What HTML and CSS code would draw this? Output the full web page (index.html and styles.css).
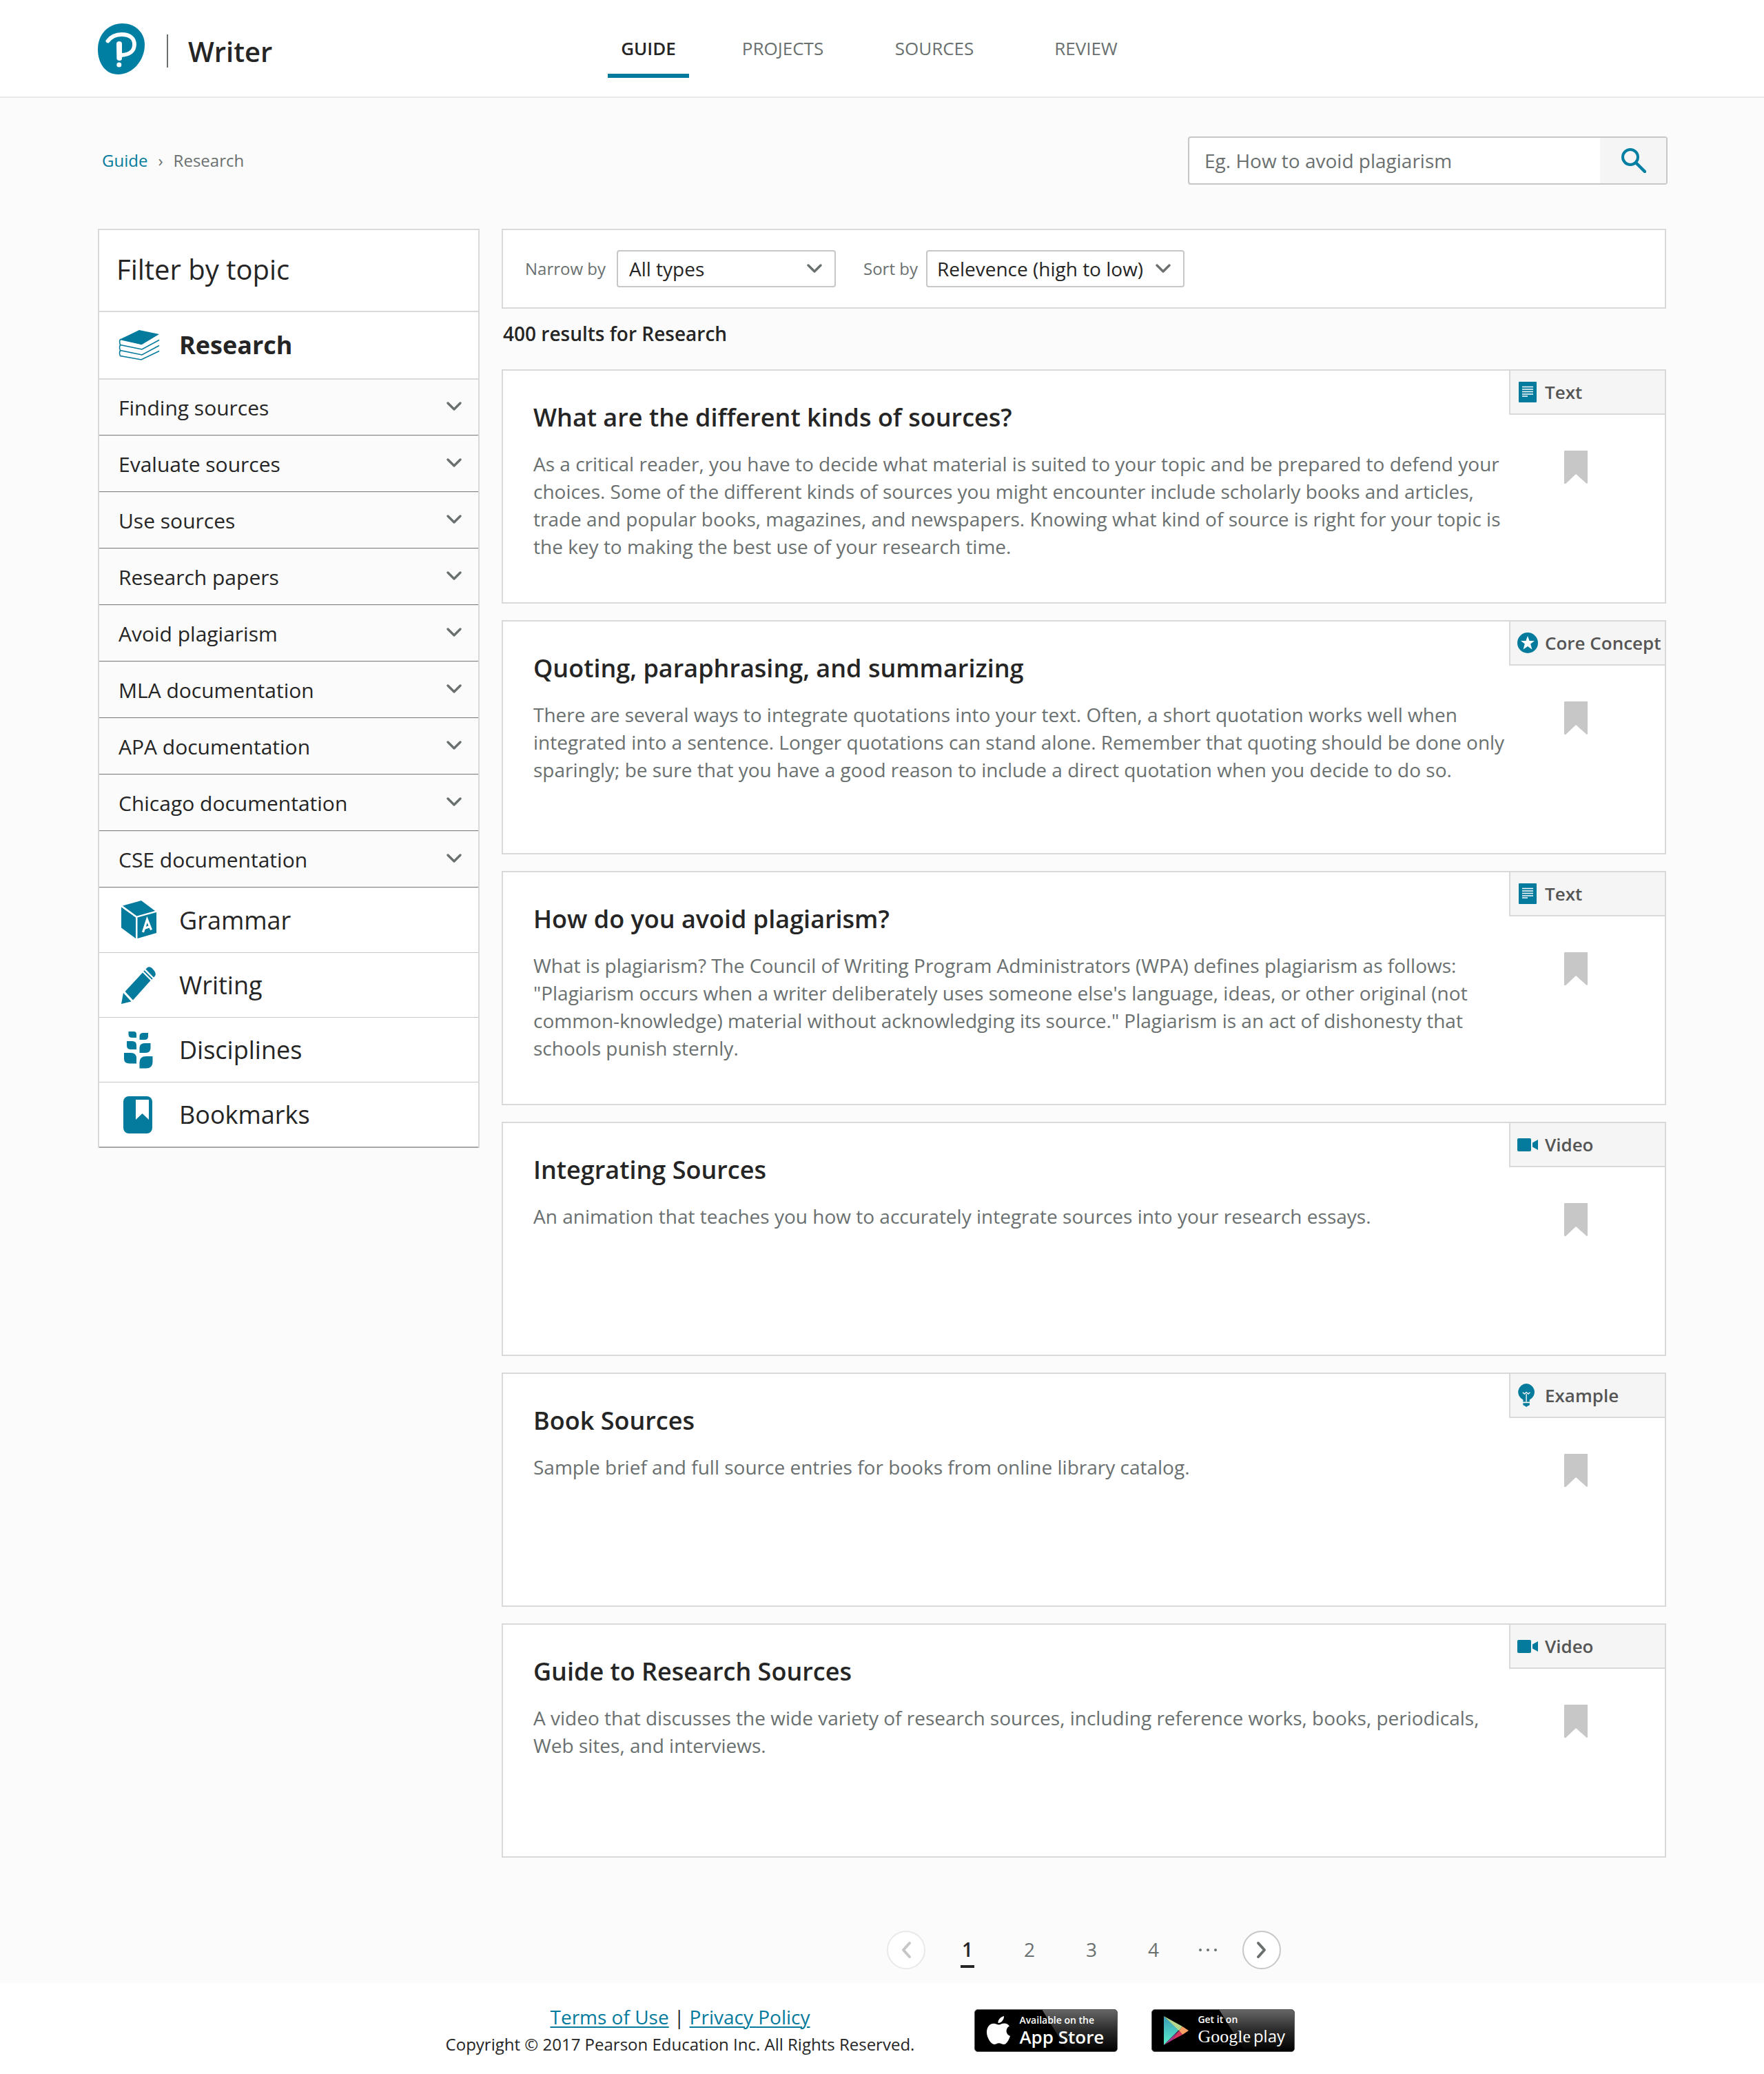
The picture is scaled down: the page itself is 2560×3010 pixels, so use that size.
FILE: index.html
```html
<!DOCTYPE html>
<html lang="en">
<head>
<meta charset="utf-8">
<title>Writer – Research</title>
<link rel="stylesheet" href="styles.css">
</head>
<body>
<svg class="sprite" aria-hidden="true">
  <symbol id="chevron" viewBox="0 0 22 14"><path d="M2 2l9 9 9-9" fill="none" stroke="currentColor" stroke-width="3.400" stroke-linecap="round" stroke-linejoin="round"/></symbol>
  <symbol id="bookmark" viewBox="0 0 34 48"><path d="M1 0h32q1 0 1 1v46q0 1-1.600.8L17 34 2.600 47.800Q0 48.500 0 47V1q0-1 1-1z" fill="currentColor"/></symbol>
  <symbol id="tag-text" viewBox="0 0 30 34"><rect x="2" y="2" width="26" height="30" rx="1" fill="currentColor"/><path d="M7 9.500h16M7 13h16M7 16.500h16M7 20h16M7 23h8" stroke="#fff" stroke-width="1.600"/></symbol>
  <symbol id="tag-core" viewBox="0 0 30 34"><circle cx="15" cy="17" r="15" fill="currentColor"/><path d="M15 7l2.600 7h7.400l-5.800 4.500 2.200 8-6.400-4.500-6.400 4.500 2.200-8L5 14h7.400z" fill="#fff"/></symbol>
  <symbol id="tag-video" viewBox="0 0 30 34"><rect y="8" width="20" height="19" rx="2" fill="currentColor"/><path d="M22 14.500L30 10v15l-8-4.500z" fill="currentColor"/></symbol>
  <symbol id="tag-example" viewBox="0 0 30 36"><path d="M13 0a13 13 0 0 1 5 24.800V28H8v-3.200A13 13 0 0 1 13 0z" fill="currentColor"/><path d="M8 30h10v3l-3 1.500-2 1.500-2-1.500L8 33z" fill="currentColor"/><path d="M13 28V16m-5.500-2.500L10 16l3-2.500 3 2.500 2.500-2.500" fill="none" stroke="#f5f5f5" stroke-width="1.500"/></symbol>
</svg>

<header class="topbar">
  <a class="brand" href="#">
    <svg width="68" height="74" viewBox="0 0 68 74" role="img" aria-label="Pearson"><path d="M35.500 0C54 0 68 13 68 31c0 23-18 43-38.500 43C11 74 0 58 0 37.500 0 15 16 0 35.500 0z" fill="#007fa3"/><path d="M14.500 25.500C19 19.500 26 16 34.500 16 46 16 53 21.500 53 30.500c0 9.500-7 15-18.500 15.500" fill="none" stroke="#fff" stroke-width="5.800" stroke-linecap="round"/><path d="M27 29.500q0-3.500 4-3.500t4 3.500V51q0 3-3.600 3T27.400 51z" fill="#fff"/><circle cx="30.800" cy="60" r="3.500" fill="#fff"/></svg>
    <span class="brand-name">Writer</span>
  </a>
  <nav class="tabs" aria-label="Main">
    <a class="tab tab-active" href="#" aria-current="page">GUIDE</a>
    <a class="tab" href="#">PROJECTS</a>
    <a class="tab" href="#">SOURCES</a>
    <a class="tab" href="#">REVIEW</a>
  </nav>
</header>

<div class="page">
  <div class="subbar">
    <nav class="crumbs" aria-label="Breadcrumb"><a href="#">Guide</a><span class="crumb-sep">›</span><span>Research</span></nav>
    <form class="search">
      <input type="search" aria-label="Search" placeholder="Eg. How to avoid plagiarism">
      <button type="button" aria-label="Search"><svg width="36" height="36" viewBox="0 0 36 36"><circle cx="13" cy="13" r="11" fill="none" stroke="#007fa3" stroke-width="4"/><path d="M21 21l13 13" stroke="#007fa3" stroke-width="4.500" stroke-linecap="round"/></svg></button>
    </form>
  </div>

  <div class="columns">
    <aside class="sidebar">
      <h2 class="side-title">Filter by topic</h2>
      <a class="topic topic-open" href="#"><svg width="60" height="60" viewBox="0 0 60 60"><path d="M30 8L59 14 34 29 2 21.500z" fill="#047a9c"/><g fill="none" stroke="#047a9c" stroke-width="1.600"><path d="M3 21Q.5 24 2.500 29.500L34 36 59 22.500M2.500 21.500L34 28.500"/><path d="M2.500 30Q.5 33 2.500 37.500L34 44 59 30.500"/><path d="M2.500 38Q.5 41 2.500 45.500L33 51 59 38.500"/></g></svg>Research</a>
      <button class="subtopic" type="button">Finding sources<svg class="chev"><use href="#chevron"/></svg></button>
      <button class="subtopic" type="button">Evaluate sources<svg class="chev"><use href="#chevron"/></svg></button>
      <button class="subtopic" type="button">Use sources<svg class="chev"><use href="#chevron"/></svg></button>
      <button class="subtopic" type="button">Research papers<svg class="chev"><use href="#chevron"/></svg></button>
      <button class="subtopic" type="button">Avoid plagiarism<svg class="chev"><use href="#chevron"/></svg></button>
      <button class="subtopic" type="button">MLA documentation<svg class="chev"><use href="#chevron"/></svg></button>
      <button class="subtopic" type="button">APA documentation<svg class="chev"><use href="#chevron"/></svg></button>
      <button class="subtopic" type="button">Chicago documentation<svg class="chev"><use href="#chevron"/></svg></button>
      <button class="subtopic" type="button">CSE documentation<svg class="chev"><use href="#chevron"/></svg></button>
      <a class="topic" href="#"><svg width="60" height="60" viewBox="0 0 60 60"><g fill="#047a9c"><path d="M6 8.500L33 1 53 16 26.500 23.500z"/><path d="M4 10.500L25 25.500V56L4 40.500z"/><path d="M27.500 25.500L55 18v30L27.500 56z"/></g><path d="M35.500 47L41.500 28.500 47.500 43.500M37.500 41.500L45.500 38.500" fill="none" stroke="#fff" stroke-width="3.200"/></svg>Grammar</a>
      <a class="topic" href="#"><svg width="60" height="60" viewBox="0 0 60 60"><g fill="#047a9c"><path d="M4 57L7 41 18.500 53.500z"/><path d="M9.500 39L35 11.500 46.500 23 21 51.500z"/><path d="M40.500 5.500Q44 1.500 48.500 5L52 9Q55.500 14 52 17.500L51 18.500 39.500 6.500z"/><path d="M37 9l12 12" stroke="#047a9c" stroke-width="1.800"/></g></svg>Writing</a>
      <a class="topic" href="#"><svg width="60" height="60" viewBox="0 0 60 60"><g fill="#047a9c"><path d="M14.500 3H22q4 0 4 4v5h-6q-5.500 0-5.500-4.500z"/><path d="M43 5h-7q-5.500 0-5.500 5v5H38q5 0 5-5z"/><path d="M12 17h8q6 0 6 6v6h-8q-6 0-6-5z"/><path d="M46.500 20H38q-7.500 0-7.500 7v7H39q7.500 0 7.500-7z"/><path d="M8 34h10q8 0 8 8v7.500H16q-8 0-8-7z"/><path d="M49.500 39H40q-9.500 0-9.500 9v8.500H40q9.500 0 9.500-9z"/></g></svg>Disciplines</a>
      <a class="topic" href="#"><svg width="60" height="60" viewBox="0 0 60 60"><rect x="7" y="3" width="42" height="54" rx="8" fill="#047a9c"/><path d="M25 8h19v29l-9.500-9L25 37z" fill="#fff"/></svg>Bookmarks</a>
    </aside>

    <main class="results">
      <form class="filters">
        <label for="types">Narrow by</label>
        <span class="pick pick-types"><select id="types"><option>All types</option></select><svg class="chev"><use href="#chevron"/></svg></span>
        <label class="label-sort" for="sort">Sort by</label>
        <span class="pick pick-sort"><select id="sort"><option>Relevence (high to low)</option></select><svg class="chev"><use href="#chevron"/></svg></span>
      </form>
      <p class="count">400 results for Research</p>

      <div class="cards">
        <article class="card">
          <div class="card-text"><h3>What are the different kinds of sources?</h3>
          <p>As a critical reader, you have to decide what material is suited to your topic and be prepared to defend your choices. Some of the different kinds of sources you might encounter include scholarly books and articles, trade and popular books, magazines, and newspapers. Knowing what kind of source is right for your topic is the key to making the best use of your research time.</p></div>
          <div class="card-side"><div class="tag"><svg><use href="#tag-text"/></svg>Text</div><button class="save" type="button" aria-label="Bookmark"><svg><use href="#bookmark"/></svg></button></div>
        </article>
        <article class="card">
          <div class="card-text"><h3>Quoting, paraphrasing, and summarizing</h3>
          <p>There are several ways to integrate quotations into your text. Often, a short quotation works well when integrated into a sentence. Longer quotations can stand alone. Remember that quoting should be done only sparingly; be sure that you have a good reason to include a direct quotation when you decide to do so.</p></div>
          <div class="card-side"><div class="tag"><svg><use href="#tag-core"/></svg>Core Concept</div><button class="save" type="button" aria-label="Bookmark"><svg><use href="#bookmark"/></svg></button></div>
        </article>
        <article class="card">
          <div class="card-text"><h3>How do you avoid plagiarism?</h3>
          <p>What is plagiarism? The Council of Writing Program Administrators (WPA) defines plagiarism as follows: "Plagiarism occurs when a writer deliberately uses someone else's language, ideas, or other original (not common-knowledge) material without acknowledging its source." Plagiarism is an act of dishonesty that schools punish sternly.</p></div>
          <div class="card-side"><div class="tag"><svg><use href="#tag-text"/></svg>Text</div><button class="save" type="button" aria-label="Bookmark"><svg><use href="#bookmark"/></svg></button></div>
        </article>
        <article class="card">
          <div class="card-text"><h3>Integrating Sources</h3>
          <p>An animation that teaches you how to accurately integrate sources into your research essays.</p></div>
          <div class="card-side"><div class="tag"><svg><use href="#tag-video"/></svg>Video</div><button class="save" type="button" aria-label="Bookmark"><svg><use href="#bookmark"/></svg></button></div>
        </article>
        <article class="card">
          <div class="card-text"><h3>Book Sources</h3>
          <p>Sample brief and full source entries for books from online library catalog.</p></div>
          <div class="card-side"><div class="tag"><svg><use href="#tag-example"/></svg>Example</div><button class="save" type="button" aria-label="Bookmark"><svg><use href="#bookmark"/></svg></button></div>
        </article>
        <article class="card">
          <div class="card-text"><h3>Guide to Research Sources</h3>
          <p>A video that discusses the wide variety of research sources, including reference works, books, periodicals, Web sites, and interviews.</p></div>
          <div class="card-side"><div class="tag"><svg><use href="#tag-video"/></svg>Video</div><button class="save" type="button" aria-label="Bookmark"><svg><use href="#bookmark"/></svg></button></div>
        </article>
      </div>

      <nav class="pager" aria-label="Pages">
        <button class="arrow" type="button" aria-label="Previous page" disabled><svg width="16" height="26" viewBox="0 0 16 26"><path d="M13 3L4 13l9 10" fill="none" stroke="currentColor" stroke-width="4" stroke-linecap="round" stroke-linejoin="round"/></svg></button>
        <div class="pages">
          <a class="num num-active" href="#" aria-current="page"><span>1</span></a>
          <a class="num" href="#"><span>2</span></a>
          <a class="num" href="#"><span>3</span></a>
          <a class="num" href="#"><span>4</span></a>
          <svg class="dots" width="68" height="6" viewBox="0 0 68 6"><g fill="#6a7070"><circle cx="23" cy="3" r="2"/><circle cx="34" cy="3" r="2"/><circle cx="45" cy="3" r="2"/></g></svg>
        </div>
        <button class="arrow" type="button" aria-label="Next page"><svg width="16" height="26" viewBox="0 0 16 26"><path d="M3 3l9 10-9 10" fill="none" stroke="currentColor" stroke-width="4" stroke-linecap="round" stroke-linejoin="round"/></svg></button>
      </nav>
    </main>
  </div>
</div>

<footer class="footer">
  <div class="legal">
    <p class="links"><a href="#">Terms of Use</a> <span>|</span> <a href="#">Privacy Policy</a></p>
    <p class="copy">Copyright © 2017 Pearson Education Inc. All Rights Reserved.</p>
  </div>
  <div class="stores">
    <a class="store" href="#">
      <svg width="34" height="42" viewBox="0 0 34 42"><path d="M25 0c.3 5-3.800 10-8.600 10C16 5.500 20.500.6 25 0z" fill="#fff"/><path d="M17.500 12.500c2 0 4.500-2 8-2 3 0 5.800 1.600 7.300 4-6.300 3.700-5.300 12 1.200 14.500C32 35 28.500 41 25 41c-3 0-4-1.800-7.300-1.800S13.500 41 11 41C6 41 0 31 0 23.500 0 15 5 10.700 10 10.700c3.300 0 5.500 1.800 7.500 1.800z" fill="#fff"/></svg>
      <span class="store-text"><span class="store-small">Available on the</span><span class="store-big">App Store</span></span>
    </a>
    <a class="store" href="#">
      <svg width="36" height="42" viewBox="0 0 36 42"><defs><linearGradient id="play" x1="0" y1="0" x2="0" y2="1"><stop offset="0" stop-color="#3a9bb8"/><stop offset="1" stop-color="#58efc8"/></linearGradient></defs><path d="M0 0l22 20L0 42z" fill="url(#play)"/><path d="M0 0l27 15-5 6z" fill="#b5d98c"/><path d="M27 15l9 6-9 6-5-6z" fill="#fba063"/><path d="M22 21l5 6L12 35z" fill="#d9365e"/><path d="M12 35L22 21 0 42z" fill="#b03a91"/></svg>
      <span class="store-text"><span class="store-small">Get it on</span><span class="store-big store-google"><span class="google">Google</span><span class="play">play</span></span></span>
    </a>
  </div>
</footer>
</body>
</html>
```
FILE: styles.css
```css
* { box-sizing: border-box; }

body {
  margin: 0;
  background: #fff;
  color: #252525;
  font-family: "Open Sans", "Noto Sans", sans-serif;
  font-size: 28px;
  line-height: 40px;
}

h2, h3, p { margin: 0; font-weight: 400; }
a { color: inherit; text-decoration: none; }
button, input, select { font: inherit; color: inherit; margin: 0; padding: 0; border: 0; background: none; }
svg { display: block; flex: none; }
.sprite { position: absolute; width: 0; height: 0; }

/* Header */
.topbar {
  display: flex;
  height: 142px;
  padding: 0 142px;
  border-bottom: 2px solid #e9e9e9;
}
.brand { display: flex; align-items: center; flex: 0 0 740px; padding-top: 2px; }
.brand-name {
  height: 48px;
  margin: 6px 0 0 32px;
  padding-left: 29px;
  border-left: 2px solid #6a7070;
  font-size: 40px;
  font-weight: 600;
  line-height: 50px;
}
.tabs {
  display: grid;
  grid-template-columns: 118px 272px 168px 272px;
  height: 113px;
}
.tab {
  padding-top: 50px;
  border-bottom: 6px solid transparent;
  color: #6a7070;
  font-size: 26px;
  text-align: center;
}
.tab-active { border-color: #047a9c; color: #252525; font-weight: 600; }

/* Page */
.page { padding: 56px 142px 20px; background: #fbfbfb; }
.subbar { display: flex; justify-content: space-between; align-items: center; margin: 0 -2px 64px 0; }
.crumbs { display: flex; gap: 15px; padding-left: 6px; color: #6a7070; font-size: 24px; }
.crumbs a { color: #047a9c; }
.search {
  display: flex;
  width: 696px;
  height: 70px;
  border: 2px solid #c7c7c7;
  border-radius: 4px;
  background: #fff;
}
.search input { flex: 1; min-width: 0; padding: 0 22px; outline: 0; }
.search input::placeholder { color: #6a7070; opacity: 1; }
.search button { display: grid; place-items: center; width: 96px; padding-left: 2px; background: #f5f5f5; }

.columns { display: flex; align-items: flex-start; gap: 32px; }

/* Sidebar */
.sidebar {
  display: flex;
  flex-direction: column;
  flex: 0 0 554px;
  border: 2px solid #d9d9d9;
  border-bottom: 0;
  background: #fff;
}
.side-title {
  padding: 33px 25px 36px;
  border-bottom: 2px solid #d9d9d9;
  font-size: 40px;
  line-height: 48px;
}
.topic {
  display: flex;
  align-items: center;
  gap: 28px;
  height: 94px;
  padding-left: 28px;
  border-bottom: 1px solid #c7c7c7;
  font-size: 36px;
}
.topic:last-child { height: 95px; border-bottom: 2px solid #a6a8a8; }
.topic-open { height: 98px; border-bottom: 2px solid #d9d9d9; font-weight: 700; }
.subtopic {
  display: flex;
  align-items: center;
  justify-content: space-between;
  height: 82px;
  padding: 0 24px 0 28px;
  border-bottom: 1px solid #e9e9e9;
  box-shadow: inset 0 -1px #818181;
  background: #fbfbfb;
  font-size: 30px;
  text-align: left;
}
.chev { width: 22px; height: 14px; color: #6a7070; }
.subtopic .chev { margin-bottom: 4px; }

/* Results */
.results { flex: 1; min-width: 0; }
.filters {
  display: flex;
  align-items: center;
  height: 116px;
  padding-left: 32px;
  border: 2px solid #d9d9d9;
  background: #fff;
}
.filters label { color: #6a7070; font-size: 24px; }
.filters .label-sort { margin-left: 40px; }
.pick { position: relative; margin-left: 16px; }
.pick-types { width: 318px; }
.pick-sort { width: 375px; margin-left: 12px; }
.pick select {
  width: 100%;
  height: 54px;
  padding: 0 16px;
  border: 2px solid #c7c7c7;
  border-radius: 4px;
  background: #fff;
  appearance: none;
}
.pick-sort select { padding-left: 14px; }
.pick .chev { position: absolute; top: 20px; right: 20px; pointer-events: none; }
.count { margin: 16px 2px 32px; font-weight: 600; }

.cards { display: grid; gap: 24px; }
.card {
  display: grid;
  grid-template-columns: 1fr 226px;
  min-height: 340px;
  border: 2px solid #d9d9d9;
  background: #fff;
}
.card-text { padding: 44px 0 44px 44px; }
.card h3 { margin-bottom: 23px; font-size: 36px; font-weight: 600; line-height: 48px; }
.card p { color: #6a7070; }
.tag {
  display: flex;
  align-items: center;
  gap: 10px;
  height: 64px;
  padding-left: 10px;
  border: solid #d9d9d9;
  border-width: 0 0 2px 2px;
  background: #f5f5f5;
  color: #555;
  font-size: 26px;
  font-weight: 600;
  white-space: nowrap;
}
.tag svg { width: 30px; height: 34px; color: #047a9c; }
.save { margin: 52px 0 0 80px; color: #c7c7c7; }
.save svg { width: 34px; height: 48px; }

/* Pagination */
.pager { display: flex; justify-content: center; gap: 16px; margin-top: 106px; }
.arrow {
  display: grid;
  place-items: center;
  width: 56px;
  height: 56px;
  border: 2px solid #c7c7c7;
  border-radius: 50%;
  background: #fff;
  color: #6a7070;
}
.arrow:disabled { border-color: #e9e9e9; color: #c7c7c7; }
.pages { display: flex; align-items: center; }
.num { width: 90px; color: #6a7070; text-align: center; }
.num span { display: inline-block; width: 20px; height: 47px; margin-top: 5px; border-bottom: 4px solid transparent; }
.num-active { color: #252525; font-weight: 600; }
.num-active span { border-color: #252525; }

/* Footer */
.footer {
  display: flex;
  justify-content: center;
  align-items: center;
  gap: 87px;
  min-height: 132px;
  padding: 5px 34px 0 0;
}
.legal { text-align: center; }
.links a { color: #047a9c; text-decoration: underline; text-decoration-thickness: 2px; text-underline-offset: 3px; }
.copy { font-size: 24px; }
.stores { display: flex; gap: 49px; }
.store {
  position: relative;
  display: flex;
  align-items: center;
  gap: 13px;
  width: 208px;
  height: 62px;
  padding-left: 17px;
  overflow: hidden;
  border: 1px solid #555;
  border-radius: 5px;
  background: #000;
  color: #fff;
}
.store::before {
  content: "";
  position: absolute;
  inset: 0;
  background: linear-gradient(#666, #2a2a2a 50%, #000);
  clip-path: polygon(47% 0, 100% 0, 100% 100%, 65% 100%);
}
.store svg, .store-text { position: relative; }
.store-text { display: flex; flex-direction: column; white-space: nowrap; }
.store-small { font-size: 14px; font-weight: 600; line-height: 18px; }
.store-big { font-size: 26px; font-weight: 600; line-height: 30px; }
.store-google { display: flex; align-items: baseline; gap: 4px; font-weight: 400; }
.google { font-family: "Liberation Serif", serif; }
.play { font-family: "Open Sans", sans-serif; font-size: 24px; }
```
